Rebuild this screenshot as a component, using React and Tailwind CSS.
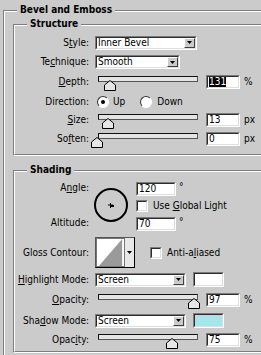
import React from 'react';

// mnemonic label: underline one character
function Mn({ text, u }) {
  if (u == null) return <span>{text}</span>;
  return (
    <span>
      {text.slice(0, u)}
      <span className="underline underline-offset-[1px]">{text[u]}</span>
      {text.slice(u + 1)}
    </span>
  );
}

function Sunken({ className = '', children }) {
  return (
    <div className={`border border-t-[#7c7c7c] border-l-[#7c7c7c] border-b-white border-r-white ${className}`}>
      <div className="h-full w-full border border-t-[#2c2c2c] border-l-[#2c2c2c] border-b-[#dedede] border-r-[#dedede] bg-white">
        {children}
      </div>
    </div>
  );
}

function Arrow() {
  return (
    <svg width="5" height="3" viewBox="0 0 5 3">
      <polygon points="0,0 5,0 2.5,3" fill="#000" />
    </svg>
  );
}

function Dropdown({ value, className }) {
  return (
    <Sunken className={`h-[14px] ${className}`}>
      <div className="flex h-full items-center">
        <span className="flex-1 pl-[1px] leading-none">{value}</span>
        <div className="mr-[0px] flex h-[10px] w-[11px] items-center justify-center border border-t-white border-l-white border-b-[#404040] border-r-[#404040] bg-[#cbcbcb]">
          <Arrow />
        </div>
      </div>
    </Sunken>
  );
}

function Field({ value, selected, className = 'w-[34px]' }) {
  return (
    <Sunken className={`h-[14px] ${className}`}>
      <div className="flex h-full items-center pl-[1px] leading-none">
        {selected ? <span className="bg-black text-white">{value}</span> : value}
      </div>
    </Sunken>
  );
}

function Slider({ pos }) {
  return (
    <div className="relative h-[14px] w-[100px]">
      <div className="mt-[2px] h-[6px] w-full border border-t-[#111] border-l-[#111] border-b-[#555] border-r-[#555] bg-[#e4e4e4]" />
      <svg className="absolute top-[4px]" style={{ left: pos - 98 - 6 }} width="12" height="11" viewBox="0 0 12 11">
        <polygon points="6,0.5 11.5,5 11.5,10.5 0.5,10.5 0.5,5" fill="#e6e6e6" stroke="#000" />
      </svg>
    </div>
  );
}

function CheckBox() {
  return <Sunken className="h-[12px] w-[12px]" />;
}

function Radio({ on }) {
  return (
    <div className="flex h-[12px] w-[12px] items-center justify-center rounded-full border border-t-[#333] border-l-[#333] border-b-white border-r-white bg-white">
      {on && <div className="h-[4px] w-[4px] rounded-full bg-black" />}
    </div>
  );
}

function Label({ children, className = '' }) {
  return <div className={`w-[74px] shrink-0 text-right leading-none ${className}`}>{children}</div>;
}

function Group({ title, className = '', children }) {
  return (
    <div className={`relative border-l border-t border-b border-l-[#7e7e7e] border-t-[#7e7e7e] border-b-white ${className}`}>
      <div className="border-l border-t border-b border-l-white border-t-white border-b-[#7e7e7e]">
        {children}
      </div>
      <span className="absolute left-[13px] top-[-7px] bg-[#cbcbcb] px-[3px] font-bold leading-[12px]">{title}</span>
    </div>
  );
}

function SliderRow({ label, u, pos, value, unit, selected, className }) {
  return (
    <div className={`flex items-center ${className}`}>
      <Label><Mn text={label} u={u} /></Label>
      <div className="ml-[9px]"><Slider pos={pos} /></div>
      <Field value={value} selected={selected} className="ml-[8px] w-[34px]" />
      <span className="ml-[4px] leading-none">{unit}</span>
    </div>
  );
}

export default function App() {
  return (
    <div className="h-[355px] w-[261px] overflow-hidden bg-[#cbcbcb] pl-[3px] pt-[10px] font-['DejaVu_Sans_Condensed','Liberation_Sans',sans-serif] text-[10px] text-black">
      <Group title="Bevel and Emboss" className="w-[300px]">
        <div className="pb-[20px] pl-[8px] pt-[12px]">
          {/* Structure */}
          <Group title="Structure" className="w-[290px]">
            <div className="pb-[5px] pt-[7px]">
              <div className="flex h-[19px] items-center">
                <Label><Mn text="Style:" u={1} /></Label>
                <Dropdown value="Inner Bevel" className="ml-[6px] w-[102px]" />
              </div>
              <div className="flex h-[20px] items-center">
                <Label><Mn text="Technique:" u={2} /></Label>
                <Dropdown value="Smooth" className="ml-[6px] w-[85px]" />
              </div>
              <SliderRow label="Depth:" u={0} pos={110} value="131" unit="%" selected className="h-[20px]" />
              <div className="flex h-[19px] items-center">
                <Label>Direction:</Label>
                <div className="ml-[8px]"><Radio on /></div>
                <span className="ml-[4px] leading-none">Up</span>
                <div className="ml-[15px]"><Radio /></div>
                <span className="ml-[5px] leading-none">Down</span>
              </div>
              <SliderRow label="Size:" u={0} pos={108} value="13" unit="px" className="h-[18px]" />
              <SliderRow label="Soften:" u={2} pos={97} value="0" unit="px" className="h-[20px]" />
            </div>
          </Group>

          {/* Shading */}
          <Group title="Shading" className="mt-[14px] w-[290px]">
            <div className="pb-[4px] pt-[10px]">
              <div className="flex">
                <div className="flex w-[74px] flex-col">
                  <Label className="mt-[1px]"><Mn text="Angle:" u={1} /></Label>
                  <Label className="mt-auto mb-[3px]">Altitude:</Label>
                </div>
                <div className="ml-[5px] mt-[6px] flex h-[34px] w-[34px] items-center justify-center rounded-full border-2 border-black">
                  <svg width="7" height="5" viewBox="0 0 7 5">
                    <path d="M0 2h5M2.5 0v5" stroke="#000" strokeWidth="1" />
                    <rect x="2" y="2" width="4" height="2" fill="#000" />
                  </svg>
                </div>
                <div className="ml-[8px] flex flex-col">
                  <div className="flex items-start">
                    <Field value="120" className="w-[40px]" />
                    <span className="ml-[3px] leading-none">°</span>
                  </div>
                  <div className="mt-[4px] flex h-[12px] items-center">
                    <CheckBox />
                    <span className="ml-[5px] leading-none">Use <Mn text="Global" u={0} /> Light</span>
                  </div>
                  <div className="mt-[5px] flex items-start">
                    <Field value="70" className="w-[40px]" />
                    <span className="ml-[3px] leading-none">°</span>
                  </div>
                </div>
              </div>

              <div className="mt-[6px] flex items-center">
                <Label>Gloss Contour:</Label>
                <div className="ml-[6px] flex h-[31px] w-[40px] border border-t-[#555] border-l-[#555] border-b-black border-r-black bg-white">
                  <svg width="29" height="29" viewBox="0 0 29 29" className="border border-[#777]">
                    <rect width="29" height="29" fill="#fff" />
                    <polygon points="2,29 27,0 27,29" fill="#9a9a9a" />
                  </svg>
                  <div className="flex flex-1 items-center justify-center bg-[#e8e8e8]">
                    <Arrow />
                  </div>
                </div>
                <div className="ml-[15px]"><CheckBox /></div>
                <span className="ml-[5px] leading-none"><Mn text="Anti-aliased" u={6} /></span>
              </div>

              <div className="mt-[4px] flex h-[15px] items-center">
                <Label><Mn text="Highlight Mode:" u={0} /></Label>
                <Dropdown value="Screen" className="ml-[6px] w-[91px]" />
                <Sunken className="ml-[7px] h-[15px] w-[31px]" />
              </div>
              <SliderRow label="Opacity:" u={0} pos={194} value="97" unit="%" className="mt-[6px] h-[14px]" />
              <div className="mt-[6px] flex h-[15px] items-center">
                <Label><Mn text="Shadow Mode:" u={3} /></Label>
                <Dropdown value="Screen" className="ml-[6px] w-[91px]" />
                <div className="ml-[7px] h-[15px] w-[31px] border border-t-[#7c7c7c] border-l-[#7c7c7c] border-b-white border-r-white">
                  <div className="h-full w-full border border-t-[#2c2c2c] border-l-[#2c2c2c] border-b-[#dedede] border-r-[#dedede] bg-[#a4e6eb]" />
                </div>
              </div>
              <SliderRow label="Opacity:" u={4} pos={172} value="75" unit="%" className="mt-[5px] h-[14px]" />
            </div>
          </Group>
        </div>
      </Group>
    </div>
  );
}
